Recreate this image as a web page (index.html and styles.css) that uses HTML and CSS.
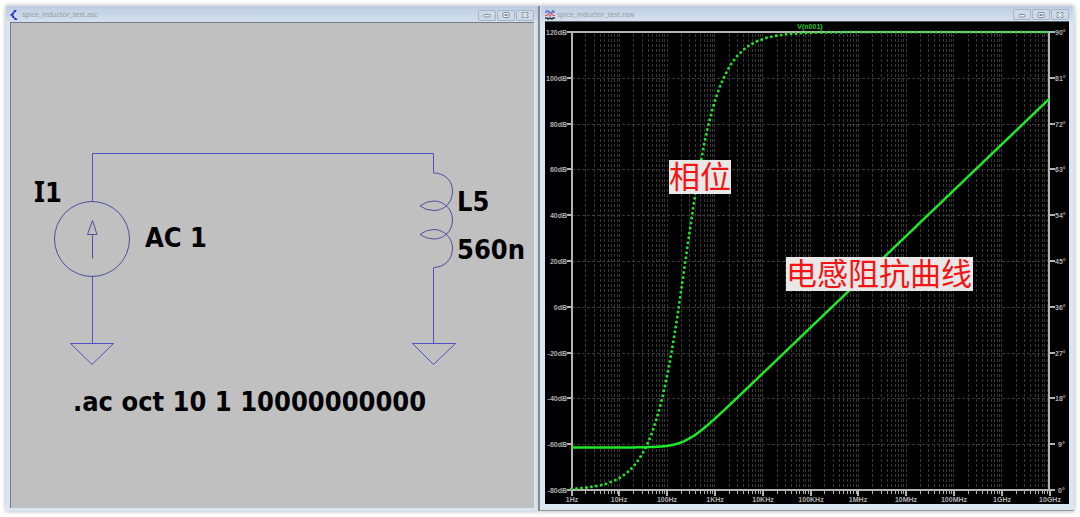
FILE: index.html
```html
<!DOCTYPE html>
<html lang="zh-CN">
<head>
<meta charset="utf-8">
<title>spice_inductor_test</title>
<link rel="stylesheet" href="styles.css">
</head>
<body>
<main class="workspace">
  <section class="window">
    <header class="titlebar">
      <svg class="title-icon" viewBox="0 0 10 10" aria-hidden="true">
        <path d="M6 0 4 2 2 5l2 3 3 2" fill="none" stroke="#2a2ac8" stroke-width="2" stroke-dasharray="3 .5"/>
        <path d="M0 5h3" stroke="#2a2ac8"/>
      </svg>
      <h1 class="title">spice_inductor_test.asc</h1>
      <div class="controls">
        <button class="control" type="button" aria-label="Minimize"><svg viewBox="0 0 8 8"><rect x="1" y="3.5" width="6" height="2.5" rx="1"/></svg></button>
        <button class="control" type="button" aria-label="Maximize"><svg viewBox="0 0 8 8"><rect x="1" y="1.5" width="6" height="5" rx="1"/><rect x="3" y="3.5" width="2" height="1"/></svg></button>
        <button class="control" type="button" aria-label="Close"><svg viewBox="0 0 8 8"><path d="M1 1.5h2l1 1 1-1h2v1L5.500 4 7 5.500v1H5l-1-1-1 1H1v-1L2.500 4 1 2.500z"/></svg></button>
      </div>
    </header>
    <svg class="client schematic" viewBox="11 23 523 485" role="img" aria-label="Schematic">
      <g class="wire">
        <path d="M92.500 201.500v-48h341v19.500M92.500 277v66.500M433.500 268v75.500"/>
        <path d="M70.500 343.500h43l-21.500 21zM412.500 343.500h43l-22 21z"/>
      </g>
      <g class="symbol">
        <circle cx="92" cy="239" r="37.500"/>
        <path d="M92.500 258.500v-24M87.500 234.500h9.500l-4.500-14z"/>
        <path d="M433.500 173C445 173 452.500 181 452.500 191C452.500 204 443 210.500 434 210.500Q426 210.500 420 206Q426 201 434 201C444 201 452.500 209 452.500 220C452.500 232 443 239 434 239Q426 239 420 234.500Q426 229.500 434 229.500C444 229.500 452.500 238 452.500 248C452.500 260 444 267.500 433.500 267.500"/>
      </g>
      <g class="label">
        <text x="34" y="202"><tspan class="serif-i">I</tspan>1</text>
        <text x="145" y="247">AC 1</text>
        <text x="457" y="211">L5</text>
        <text x="457" y="259">560n</text>
        <text x="73" y="411">.ac oct 10 1 10000000000</text>
      </g>
    </svg>
  </section>
  <section class="window plot-window">
    <header class="titlebar">
      <svg class="title-icon" viewBox="0 0 10 10" aria-hidden="true">
        <path d="M1 3V1h3v2h3V1h2v2" fill="none" stroke="#4545b5"/>
        <path d="M0 5.500h2l1-2 2 3 2-3 1 2h2" fill="none" stroke="#d54c55" stroke-width="1"/>
        <path d="M0 8h2l1 1 2-1 2 1 1-1h2" fill="none" stroke="#333" stroke-width="1.500"/>
      </svg>
      <h2 class="title">spice_inductor_test.raw</h2>
      <div class="controls">
        <button class="control" type="button" aria-label="Minimize"><svg viewBox="0 0 8 8"><rect x="1" y="3.5" width="6" height="2.5" rx="1"/></svg></button>
        <button class="control" type="button" aria-label="Maximize"><svg viewBox="0 0 8 8"><rect x="1" y="1.5" width="6" height="5" rx="1"/><rect x="3" y="3.5" width="2" height="1"/></svg></button>
        <button class="control" type="button" aria-label="Close"><svg viewBox="0 0 8 8"><path d="M1 1.5h2l1 1 1-1h2v1L5.500 4 7 5.500v1H5l-1-1-1 1H1v-1L2.500 4 1 2.500z"/></svg></button>
      </div>
    </header>
    <svg class="client plot" viewBox="545 22 524 482" role="img" aria-label="V(n001)">
      <path class="grid-v" id="grid-v"/>
      <path class="grid-h" id="grid-h"/>
      <path class="frame" d="M572 32H1049V490H572z"/>
      <path class="tick" id="minor"/>
      <path class="tick major" id="major"/>
      <g id="axis-labels" class="axis"></g>
      <text class="trace-name" x="810" y="29">V(n001)</text>
      <path class="phase" id="phase"/>
      <path class="magnitude" id="magnitude"/>
      <g class="note">
        <rect x="669" y="160" width="62" height="34"/>
        <text x="700" y="188">相位</text>
        <rect x="786" y="257" width="187" height="34"/>
        <text x="879" y="285">电感阻抗曲线</text>
      </g>
    </svg>
  </section>
</main>
<script src="plot.js"></script>
</body>
</html>
```
FILE: styles.css
```css
* { box-sizing: border-box; }
body {
  margin: 0;
  background: #fff;
  font-family: "Noto Sans", "Noto Sans CJK SC", sans-serif;
}
.workspace {
  display: grid;
  grid-template-columns: 1fr 1fr;
  height: 100vh;
  padding: 6px;
}
.window {
  display: flex;
  flex-direction: column;
  min-width: 0;
  padding: 0 4px 3px;
  background: #dae6f2;
  border-right: 2px solid #75797f;
  box-shadow: 0 0 5px #aaa;
}
.plot-window {
  padding: 0 5px 6px;
  border-right: 0;
  border-bottom: 1px solid #8f969e;
}
.titlebar {
  display: flex;
  flex: none;
  align-items: center;
  gap: 2px;
  height: 16px;
  margin: 0 -4px;
  padding: 2px 4px 0;
  background: linear-gradient(#bccde0, #d3e0ee);
}
.plot-window .titlebar { height: 15px; }
.title-icon { width: 10px; height: 10px; }
.title {
  flex: 1;
  margin: 0;
  color: #929ca6;
  font-size: 7px;
  font-weight: 400;
  line-height: 10px;
}
.controls { display: flex; gap: 1px; }
.control {
  display: flex;
  align-items: center;
  justify-content: center;
  width: 18px;
  height: 11px;
  padding: 0;
  border: 1px solid #a6b5c7;
  border-radius: 2px;
  background: #cbd9e8;
}
.control svg { width: 8px; height: 8px; fill: #eef2f6; stroke: #858e98; stroke-width: 1; }
.client { flex: 1; width: 100%; min-height: 0; }
.schematic {
  background: #c0c0c0;
  border-top: 1px solid #777b84;
  border-left: 1px solid #777b84;
}
.plot { background: #000; border-top: 1px solid #555c64; }
.wire { fill: none; stroke: #5050c4; }
.symbol { fill: none; stroke: #514c9c; }
.label {
  font-family: "DejaVu Sans Condensed", "DejaVu Sans", sans-serif;
  font-size: 27px;
  font-weight: 700;
}
.serif-i { font-family: "Noto Sans", sans-serif; font-size: 28px; }
.grid-v, .grid-h { fill: none; stroke: #383838; stroke-dasharray: 3 2; }
.frame { fill: none; stroke: #b4b4b4; stroke-width: 2; }
.tick { fill: none; stroke: #b4b4b4; stroke-width: 1; }
.major { stroke-width: 2; }
.axis { fill: #b0b0b0; font-family: "Liberation Sans", sans-serif; font-size: 7px; font-weight: 700; }
.start { text-anchor: start; }
.middle { text-anchor: middle; }
.end { text-anchor: end; }
.trace-name {
  fill: #1fc82b;
  font-family: "Liberation Sans", sans-serif;
  font-size: 7px;
  font-weight: 700;
  text-anchor: middle;
}
.phase { fill: none; stroke: #22e02a; stroke-width: 3; stroke-linecap: round; stroke-dasharray: 0 5; }
.magnitude { fill: none; stroke: #1ee828; stroke-width: 2.500; }
.note rect { fill: #e8e8e8; }
.note text {
  fill: #f41414;
  font-family: "Noto Sans CJK SC", sans-serif;
  font-size: 31px;
  font-weight: 400;
  text-anchor: middle;
}
```
FILE: plot.js
```js
const left = 571.5, right = 1049.5, top_ = 32, bottom = 490;
const decade = (right - left) / 10;
const step = (bottom - top_) / 10;
const byId = (id) => document.getElementById(id);
const labels = byId("axis-labels");

function addLabel(x, y, anchor, text) {
  const node = document.createElementNS("http://www.w3.org/2000/svg", "text");
  node.setAttribute("x", x);
  node.setAttribute("y", y);
  node.setAttribute("class", anchor);
  node.textContent = text;
  labels.append(node);
}

let vertical = "", horizontal = "", minor = "", major = "";
const names = ["1Hz", "10Hz", "100Hz", "1KHz", "10KHz", "100KHz", "1MHz", "10MHz", "100MHz", "1GHz", "10GHz"];
for (let d = 0; d <= 10; d++) {
  const x = Math.round(left + d * decade);
  const y = Math.round(top_ + d * step);
  major += `M${x} 490v6M567 ${y}h5M1049 ${y}h6`;
  addLabel(x, 502, "middle", names[d]);
  addLabel(567, y + 3, "end", `${120 - 20 * d}dB`);
  addLabel(d > 8 ? 1058 : 1055, y + 3, "start", `${90 - 9 * d}°`);
  if (d === 10) continue;
  if (d > 0) horizontal += `M572 ${y + 0.5}H1049`;
  for (let n = 2; n <= 10; n++) {
    const gx = Math.floor(left + (d + Math.log10(n)) * decade) + 0.5;
    if (gx < 1048) vertical += `M${gx} 34V490`;
    if (n < 10) minor += `M${gx} 490v4`;
  }
}
byId("grid-v").setAttribute("d", vertical);
byId("grid-h").setAttribute("d", horizontal);
byId("minor").setAttribute("d", minor);
byId("major").setAttribute("d", major);

// Impedance of a 560 nH inductor with its series resistance.
const resistance = 0.00085, inductance = 560e-9;
const phase = [], magnitude = [];
for (let i = 0; i <= 400; i++) {
  const f = 10 ** (i / 40);
  const reactance = 2 * Math.PI * f * inductance;
  const x = (left + i / 40 * decade).toFixed(1);
  const db = 20 * Math.log10(Math.hypot(resistance, reactance));
  const degrees = Math.atan2(reactance, resistance) * 180 / Math.PI;
  magnitude.push(`${x} ${(top_ + (120 - db) / 20 * step).toFixed(1)}`);
  phase.push(`${x} ${(top_ + (90 - degrees) / 9 * step).toFixed(1)}`);
}
byId("phase").setAttribute("d", "M" + phase.join("L"));
byId("magnitude").setAttribute("d", "M" + magnitude.join("L"));
```
